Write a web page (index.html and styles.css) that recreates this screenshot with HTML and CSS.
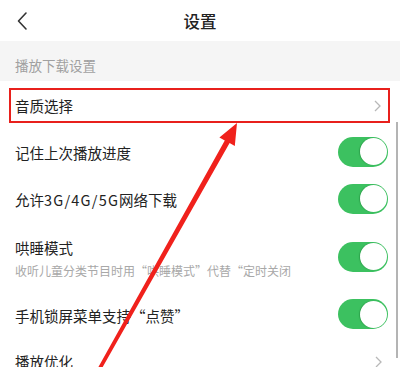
FILE: index.html
```html
<!DOCTYPE html>
<html lang="zh-CN">
<head>
<meta charset="utf-8">
<link rel="stylesheet" href="styles.css">
</head>
<body>
<div class="screen">
  <header class="header">
    <svg class="back" width="12" height="20" viewBox="0 0 12 20"><polyline points="9,2 1.5,10 9,18" fill="none" stroke="#333" stroke-width="1.6" stroke-linecap="round" stroke-linejoin="round"/></svg>
    <div class="title">设置</div>
  </header>
  <div class="section">播放下载设置</div>
  <div class="row row-marked">
    <div class="mark">
      <span class="label">音质选择</span>
      <svg class="chev" width="7" height="12" viewBox="0 0 7 12"><polyline points="1,1 6,6 1,11" fill="none" stroke="#b8b8b8" stroke-width="1.3"/></svg>
    </div>
  </div>
  <div class="row">
    <span class="label">记住上次播放进度</span>
    <span class="toggle"><span class="knob"></span></span>
  </div>
  <div class="row">
    <span class="label">允许<span class="latin">3G/4G/5G</span>网络下载</span>
    <span class="toggle"><span class="knob"></span></span>
  </div>
  <div class="row row-tall">
    <div class="texts">
      <span class="label">哄睡模式</span>
      <span class="sub">收听儿童分类节目时用“哄睡模式”代替“定时关闭</span>
    </div>
    <span class="toggle"><span class="knob"></span></span>
  </div>
  <div class="row row-short">
    <span class="label">手机锁屏菜单支持“点赞”</span>
    <span class="toggle"><span class="knob"></span></span>
  </div>
  <div class="row row-link">
    <span class="label">播放优化</span>
    <svg class="chev" width="7" height="12" viewBox="0 0 7 12"><polyline points="1,1 6,6 1,11" fill="none" stroke="#b8b8b8" stroke-width="1.3"/></svg>
  </div>
  <div class="scrollbar"></div>
  <svg class="arrow" width="400" height="367" viewBox="0 0 400 367">
    <polygon points="237,123 234.8,146 229.6,143 97.6,376 94.4,374.2 224.8,140.4 219.4,137.5" fill="#f0211c"/>
  </svg>
</div>
</body>
</html>
```
FILE: styles.css
```css
html, body {
  margin: 0;
  padding: 0;
  background: #fff;
}
.screen {
  position: relative;
  width: 400px;
  height: 367px;
  overflow: hidden;
  font-family: "Noto Sans CJK SC", "Noto Sans", sans-serif;
  color: #222;
}
.header {
  height: 41px;
  display: flex;
  align-items: center;
  justify-content: center;
  position: relative;
}
.back {
  position: absolute;
  left: 17px;
  top: 11px;
}
.title {
  font-size: 16.5px;
  color: #222;
  font-weight: 500;
}
.section {
  height: 40px;
  box-sizing: border-box;
  background: #f5f5f5;
  padding: 8px 0 0 15px;
  display: flex;
  align-items: center;
  font-size: 13.5px;
  color: #a0a0a0;
}
.row {
  height: 47px;
  box-sizing: border-box;
  display: flex;
  align-items: center;
  justify-content: space-between;
  padding: 0 12px 0 15px;
}
.label {
  font-size: 14.5px;
  color: #222;
  white-space: nowrap;
}
.latin {
  letter-spacing: 1.2px;
}
.row-marked {
  height: 48px;
  padding: 7px 10px 6px 9px;
  align-items: stretch;
}
.mark {
  flex: 1;
  border: 2px solid #e8201c;
  display: flex;
  align-items: center;
  justify-content: space-between;
  padding: 0 7px 0 4px;
}
.row-tall {
  height: 69px;
}
.row-short {
  height: 46px;
}
.row-link {
  padding-right: 18px;
}
.texts {
  display: flex;
  flex-direction: column;
  gap: 4px;
}
.sub {
  font-size: 12px;
  color: #a8a8a8;
  white-space: nowrap;
}
.toggle {
  width: 50px;
  height: 30px;
  border-radius: 15px;
  background: #3cc160;
  display: flex;
  align-items: center;
  justify-content: flex-end;
  padding: 0 1.5px;
  box-sizing: border-box;
  margin-top: -2px;
}
.knob {
  width: 27px;
  height: 27px;
  border-radius: 50%;
  background: #fff;
  box-shadow: -1px 0 1px rgba(20, 110, 40, 0.35);
}
.scrollbar {
  position: absolute;
  left: 396px;
  top: 122px;
  width: 2px;
  height: 236px;
  background: #b4b4b4;
}
.arrow {
  position: absolute;
  left: 0;
  top: 0;
}
```
